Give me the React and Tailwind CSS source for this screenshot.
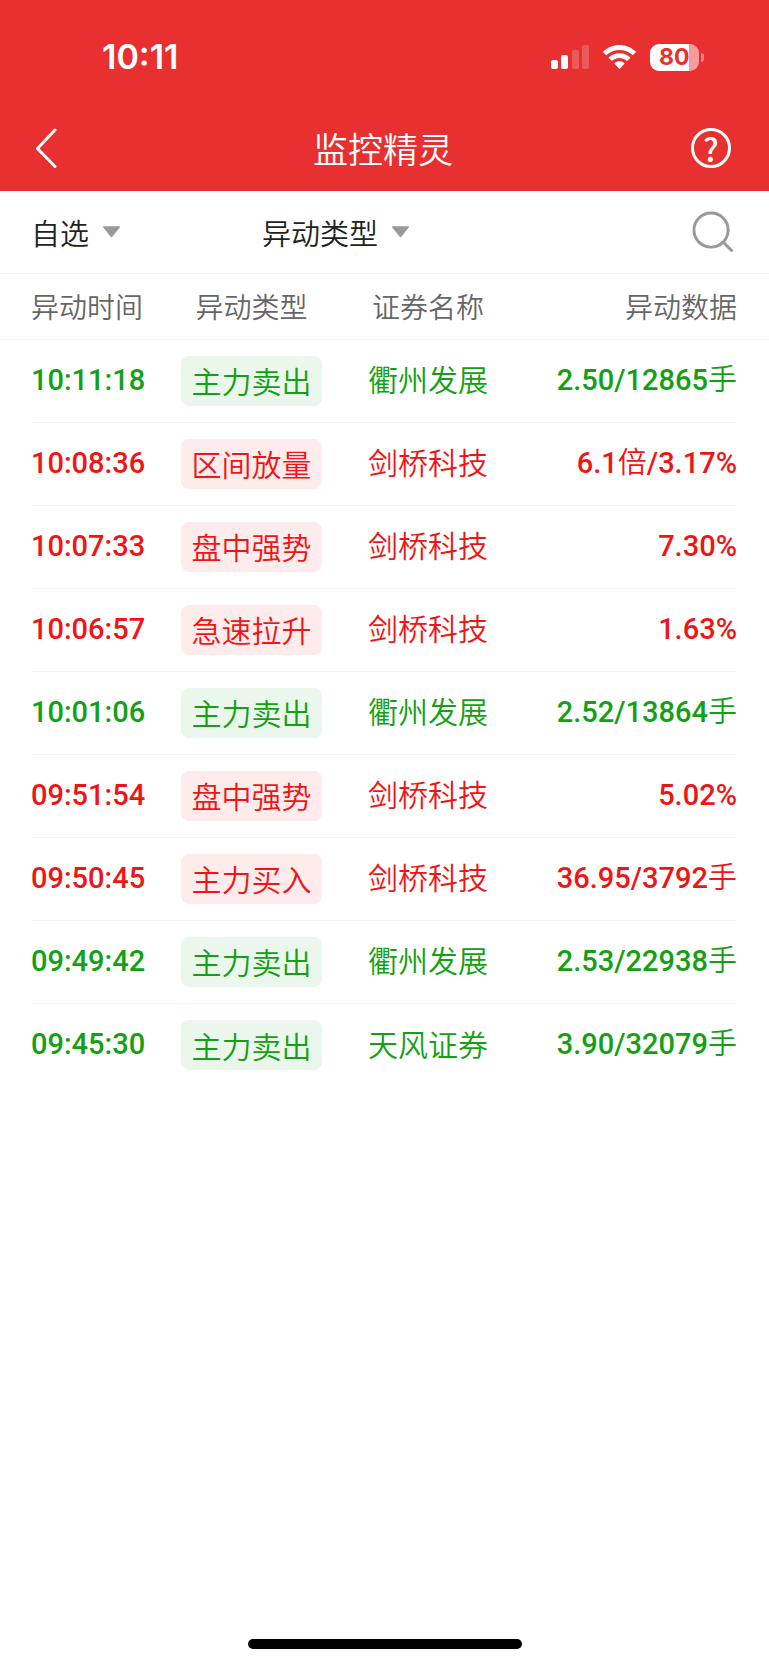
const rows = [
  { time: '10:11:18', type: '主力卖出', name: '衢州发展', data: '2.50/12865手', up: false },
  { time: '10:08:36', type: '区间放量', name: '剑桥科技', data: '6.1倍/3.17%', up: true },
  { time: '10:07:33', type: '盘中强势', name: '剑桥科技', data: '7.30%', up: true },
  { time: '10:06:57', type: '急速拉升', name: '剑桥科技', data: '1.63%', up: true },
  { time: '10:01:06', type: '主力卖出', name: '衢州发展', data: '2.52/13864手', up: false },
  { time: '09:51:54', type: '盘中强势', name: '剑桥科技', data: '5.02%', up: true },
  { time: '09:50:45', type: '主力买入', name: '剑桥科技', data: '36.95/3792手', up: true },
  { time: '09:49:42', type: '主力卖出', name: '衢州发展', data: '2.53/22938手', up: false },
  { time: '09:45:30', type: '主力卖出', name: '天风证券', data: '3.90/32079手', up: false },
];

function StatusBar() {
  return (
    <div className="flex h-[104px] items-center justify-between pt-[10px] pl-[102px] pr-[65px] font-['Inter',sans-serif]">
      <span className="text-[34px] font-semibold leading-10">10:11</span>
      <div className="flex items-center">
        {/* Signal */}
        <svg width="38" height="24" viewBox="0 0 38 24" fill="white">
          <rect x="0" y="15" width="7" height="9" rx="2" />
          <rect x="10" y="10" width="7" height="14" rx="2" />
          <rect x="21" y="5" width="7" height="19" rx="2" opacity="0.2" />
          <rect x="31" y="0" width="7" height="24" rx="2" opacity="0.2" />
        </svg>
        {/* Wifi */}
        <svg className="ml-[14px]" width="33" height="24" viewBox="0 0 33 24" fill="white">
          <path d="M16.500 0C10.300 0 4.700 2.400.500 6.300a.9.9 0 0 0 0 1.300l2.100 2.100a.9.9 0 0 0 1.200 0C7.200 6.700 11.600 4.900 16.500 4.900s9.300 1.800 12.700 4.800a.9.9 0 0 0 1.200 0l2.100-2.100a.9.9 0 0 0 0-1.300C28.300 2.400 22.700 0 16.500 0Z" />
          <path d="M16.500 8.200c-4 0-7.600 1.500-10.400 3.900a.9.9 0 0 0 0 1.300l2.200 2.200a.9.9 0 0 0 1.200 0c1.900-1.600 4.300-2.500 7-2.500s5.100.9 7 2.500a.9.9 0 0 0 1.200 0l2.200-2.200a.9.9 0 0 0 0-1.300c-2.800-2.400-6.400-3.900-10.400-3.900Z" />
          <path d="M16.500 16.200c-1.700 0-3.300.600-4.600 1.500a.9.9 0 0 0-.1 1.400l4.100 4.400a.9.9 0 0 0 1.200 0l4.100-4.400a.9.9 0 0 0-.1-1.400c-1.300-.9-2.900-1.500-4.600-1.500Z" />
        </svg>
        {/* Battery */}
        <div className="ml-[14px] flex h-[27px] w-[49px] items-center overflow-hidden rounded-[9px] bg-linear-to-r from-white from-80% to-[#f49b9c] to-80% pl-[9px] text-[23px] font-bold leading-[27px] text-[#e83030]">
          80
        </div>
        <div className="ml-[2px] h-[9px] w-[3px] rounded-r-full bg-[#f18384]" />
      </div>
    </div>
  );
}

function Filter({ label }) {
  return (
    <div className="relative flex items-center">
      <select
        aria-label={label}
        className="field-sizing-content appearance-none bg-transparent pr-8 text-[29px] leading-10 outline-none"
      >
        <option>{label}</option>
      </select>
      <svg className="pointer-events-none absolute right-0" width="19" height="12" viewBox="0 0 19 12">
        <path d="M1.800 1h15.400L9.500 10.500Z" fill="#999999" stroke="#999999" strokeWidth="1.500" strokeLinejoin="round" />
      </svg>
    </div>
  );
}

function Row({ row, last }) {
  const cell = `flex h-[83px] items-center ${last ? '' : 'border-b border-[#f3f3f3]'}`;

  return (
    <tr className={row.up ? 'text-[#f01414]' : 'text-[#14a014]'}>
      <td className="pl-[31px]">
        <div className={`${cell} font-['Roboto',sans-serif] text-[29px] font-medium`}>{row.time}</div>
      </td>
      <td>
        <div className={cell}>
          <span
            className={`flex h-[50px] w-full items-center justify-center rounded-lg text-[30px] ${
              row.up ? 'bg-[#feecec]' : 'bg-[#ebf7ec]'
            }`}
          >
            {row.type}
          </span>
        </div>
      </td>
      <td>
        <div className={`${cell} justify-center font-['Roboto','Noto_Sans_CJK_SC',sans-serif] text-[30px]`}>
          {row.name}
        </div>
      </td>
      <td className="pr-8">
        <div className={`${cell} justify-end font-['Roboto','Noto_Sans_CJK_SC',sans-serif] text-[29px]`}>
          {/* Digits are heavier than the unit characters */}
          {row.data.split(/([倍手])/).map((part, i) => (
            <span key={i} className={/[倍手]/.test(part) ? '' : 'font-medium'}>
              {part}
            </span>
          ))}
        </div>
      </td>
    </tr>
  );
}

export default function App() {
  return (
    <div className="flex min-h-screen flex-col bg-white font-['Noto_Sans_CJK_SC',sans-serif] font-[350]">
      <header className="bg-[#e83030] text-white">
        <StatusBar />
        <div className="flex h-[87px] items-center justify-between pr-[38px] pl-[35px]">
          <button aria-label="返回" className="flex w-10">
            <svg width="22" height="40" viewBox="0 0 22 40" fill="none" stroke="white" strokeWidth="3" strokeLinecap="round" strokeLinejoin="round">
              <path d="M20 2 2.500 20.500 20 38.500" />
            </svg>
          </button>
          <h1 className="text-[35px] leading-10">监控精灵</h1>
          <button
            aria-label="帮助"
            className="flex size-10 items-center justify-center rounded-full border-3 border-white text-[32px] leading-8 font-medium"
          >
            ?
          </button>
        </div>
      </header>

      <div className="flex h-[83px] items-center border-b border-[#f3f3f3] pr-[35px] pl-[31px] text-[#222222]">
        <div className="flex w-[231px]">
          <Filter label="自选" />
        </div>
        <Filter label="异动类型" />
        <button aria-label="搜索" className="ml-auto">
          <svg width="42" height="42" viewBox="0 0 43 43" fill="none" stroke="#999999" strokeWidth="3" strokeLinecap="round">
            <circle cx="19.500" cy="19.500" r="17.500" />
            <path d="M32.500 32.500 40.500 40.500" />
          </svg>
        </button>
      </div>

      <table className="w-full table-fixed">
        <thead>
          <tr className="h-[65px] border-b border-[#f3f3f3] text-[28px] text-[#666666]">
            <th className="w-[181px] pl-[31px] text-left font-[350]">异动时间</th>
            <th className="w-[141px] font-[350]">异动类型</th>
            <th className="w-[212px] font-[350]">证券名称</th>
            <th className="pr-8 text-right font-[350]">异动数据</th>
          </tr>
        </thead>
        <tbody>
          {rows.map((row, i) => (
            <Row key={row.time} row={row} last={i === rows.length - 1} />
          ))}
        </tbody>
      </table>

      {/* Home indicator */}
      <div className="mx-auto mt-auto mb-4 h-[10px] w-[274px] rounded-full bg-black" />
    </div>
  );
}
